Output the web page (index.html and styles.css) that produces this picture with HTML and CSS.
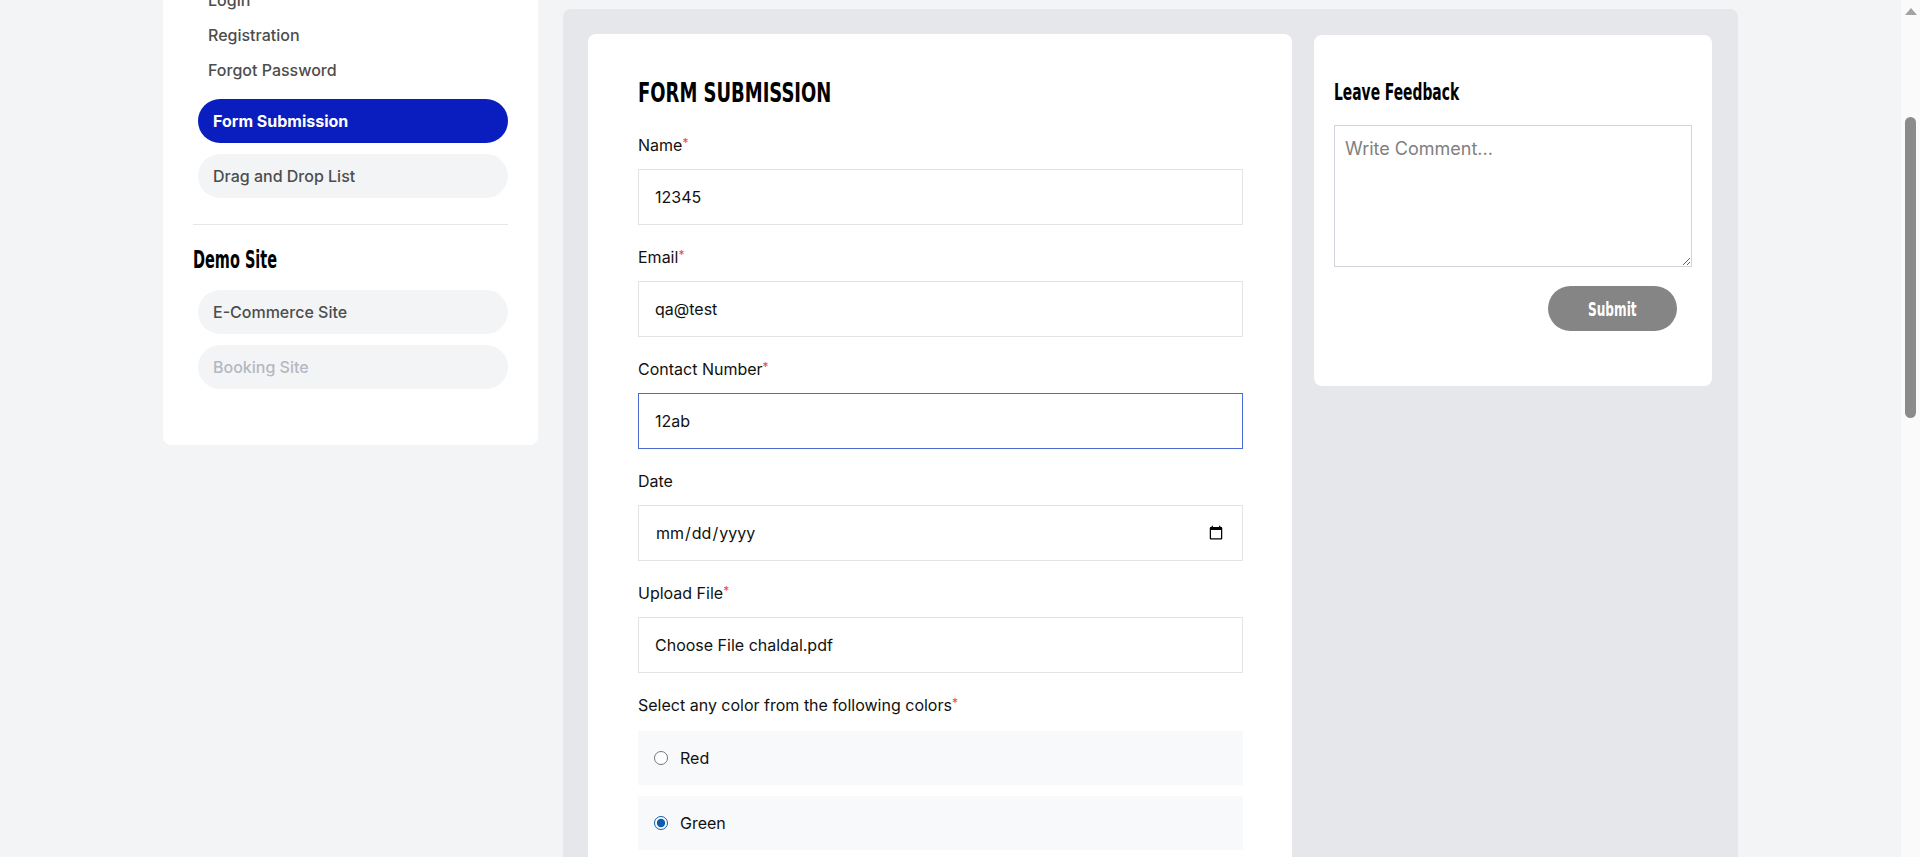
FILE: index.html
```html
<!DOCTYPE html>
<html lang="en">
<head>
<meta charset="utf-8">
<title>Form Submission</title>
<link rel="stylesheet" href="styles.css">
</head>
<body>
<div class="shell">
  <div class="layout">
    <aside class="sidebar">
      <nav class="menu">
        <a class="sub-link" href="#">Login</a>
        <a class="sub-link" href="#">Registration</a>
        <a class="sub-link" href="#">Forgot Password</a>
        <a class="pill active" href="#">Form Submission</a>
        <a class="pill" href="#">Drag and Drop List</a>
      </nav>
      <hr class="divider">
      <h3 class="side-title">Demo Site</h3>
      <nav class="menu menu-demo">
        <a class="pill" href="#">E-Commerce Site</a>
        <a class="pill disabled" href="#">Booking Site</a>
      </nav>
    </aside>

    <main class="main">
      <section class="form-card">
        <h2 class="form-title">FORM SUBMISSION</h2>
        <form class="form">
          <div class="field">
            <label>Name<span class="req">*</span></label>
            <input class="input" type="text" value="12345">
          </div>
          <div class="field">
            <label>Email<span class="req">*</span></label>
            <input class="input" type="text" value="qa@test">
          </div>
          <div class="field">
            <label>Contact Number<span class="req">*</span></label>
            <input class="input focus" type="text" value="12ab">
          </div>
          <div class="field">
            <label>Date</label>
            <input class="input" type="date">
          </div>
          <div class="field">
            <label>Upload File<span class="req">*</span></label>
            <div class="input file-box">Choose File chaldal.pdf</div>
          </div>
          <div class="field">
            <label>Select any color from the following colors<span class="req">*</span></label>
            <div class="options">
              <label class="choice"><input type="radio" name="color"> Red</label>
              <label class="choice"><input type="radio" name="color" checked> Green</label>
              <label class="choice"><input type="radio" name="color"> Blue</label>
            </div>
          </div>
        </form>
      </section>

      <aside class="feedback">
        <h3 class="feedback-title">Leave Feedback</h3>
        <textarea class="comment" placeholder="Write Comment..."></textarea>
        <div class="actions">
          <button class="submit" type="button"><span class="submit-label">Submit</span></button>
        </div>
      </aside>
    </main>
  </div>
</div>
<div class="scrollbar">
  <div class="scroll-arrow"></div>
  <div class="scroll-thumb"></div>
</div>
</body>
</html>
```

FILE: styles.css
```css
html, body {
  margin: 0;
  height: 857px;
  overflow: hidden;
}
body {
  background: #f3f4f6;
  font-family: Inter, "Noto Sans", sans-serif;
  font-size: 16px;
  color: #111;
}
.shell {
  margin-right: 19px;
}
.layout {
  width: 1575px;
  margin: 0 auto;
  display: flex;
  gap: 25px;
  align-items: flex-start;
}

/* Condensed display headings */
.side-title,
.form-title,
.feedback-title,
.submit-label {
  font-family: "DejaVu Sans Condensed", "DejaVu Sans", sans-serif;
  font-weight: 700;
  color: #000;
  transform-origin: left center;
}

/* Sidebar */
.sidebar {
  width: 375px;
  box-sizing: border-box;
  background: #fff;
  border-radius: 8px;
  margin-top: -47px;
  padding: 30px 30px 56px;
}
.menu {
  display: flex;
  flex-direction: column;
}
.sub-link {
  display: block;
  height: 35px;
  line-height: 35px;
  padding-left: 15px;
  color: #4d4d4d;
  text-decoration: none;
  font-weight: 500;
}
.pill {
  display: flex;
  align-items: center;
  height: 44px;
  margin-left: 5px;
  margin-top: 11px;
  padding-left: 15px;
  border-radius: 22px;
  background: #f3f4f6;
  color: #4d4d4d;
  font-weight: 500;
  text-decoration: none;
}
.menu-demo .pill:first-child {
  margin-top: 0;
}
.pill.active {
  background: #0a1ebf;
  color: #fff;
  font-weight: 700;
}
.pill.disabled {
  color: #b4b8c0;
}
.divider {
  border: 0;
  border-top: 1px solid #e5e7eb;
  margin: 26px 0 0;
}
.side-title {
  font-size: 24px;
  line-height: 28px;
  margin: 21px 0 16px;
  transform: scaleX(0.67);
}

/* Main */
.main {
  width: 1175px;
  box-sizing: border-box;
  margin-top: 9px;
  min-height: 900px;
  background: #e5e7eb;
  border-radius: 8px;
  padding: 25px 26px 0 25px;
  display: flex;
  gap: 22px;
  align-items: flex-start;
}
.form-card {
  width: 704px;
  box-sizing: border-box;
  background: #fff;
  border-radius: 8px;
  padding: 43px 49px 40px 50px;
}
.form-title {
  font-size: 27px;
  line-height: 32px;
  margin: 0 0 24px;
  transform: scaleX(0.74);
}
.field {
  margin-bottom: 20px;
}
.field > label {
  display: block;
  line-height: 24px;
  margin-bottom: 12px;
  color: #111;
}
.req {
  color: #ef4444;
  font-size: 12px;
  line-height: 0;
  vertical-align: 4px;
}
.input {
  display: block;
  width: 100%;
  height: 56px;
  box-sizing: border-box;
  border: 1px solid #e3e3e3;
  border-radius: 0;
  padding: 0 16px;
  margin: 0;
  font: inherit;
  color: #111;
  background: #fff;
  outline: none;
}
.input.focus {
  border-color: #4a6bd6;
}
.file-box {
  display: flex;
  align-items: center;
}
.options {
  display: flex;
  flex-direction: column;
  gap: 11px;
  padding-top: 2px;
}
.choice {
  display: flex;
  align-items: center;
  gap: 12px;
  height: 54px;
  padding-left: 16px;
  background: #f8f9fa;
  color: #111;
}
.choice input {
  margin: 0;
  width: 14px;
  height: 14px;
  accent-color: #0d5cab;
}

/* Feedback */
.feedback {
  width: 398px;
  box-sizing: border-box;
  background: #fff;
  border-radius: 8px;
  margin-top: 1px;
  padding: 43px 20px 55px;
}
.feedback-title {
  font-size: 23px;
  line-height: 28px;
  margin: 0 0 19px;
  transform: scaleX(0.67);
}
.comment {
  display: block;
  width: 100%;
  height: 142px;
  box-sizing: border-box;
  border: 1px solid #d1d5db;
  padding: 12px 10px;
  font-family: Inter, "Noto Sans", sans-serif;
  font-size: 18px;
  resize: vertical;
  outline: none;
}
.comment::placeholder {
  color: #808080;
}
.actions {
  display: flex;
  justify-content: flex-end;
  padding-right: 15px;
  margin-top: 19px;
}
.submit {
  display: flex;
  align-items: center;
  justify-content: center;
  width: 129px;
  height: 45px;
  padding: 0;
  border: 0;
  border-radius: 23px;
  background: #858585;
}
.submit-label {
  display: inline-block;
  color: #fff;
  font-size: 19px;
  transform: scaleX(0.71);
  transform-origin: center;
}

/* Fake scrollbar (page is scrolled) */
.scrollbar {
  position: fixed;
  top: 0;
  right: 0;
  width: 19px;
  height: 100%;
  background: #fafafa;
}
.scroll-arrow {
  position: absolute;
  top: 8px;
  left: 4px;
  width: 0;
  height: 0;
  border-left: 6px solid transparent;
  border-right: 6px solid transparent;
  border-bottom: 7px solid #a3a3a3;
}
.scroll-thumb {
  position: absolute;
  top: 117px;
  left: 4px;
  width: 11px;
  height: 301px;
  border-radius: 6px;
  background: #8b8b8b;
}
```
